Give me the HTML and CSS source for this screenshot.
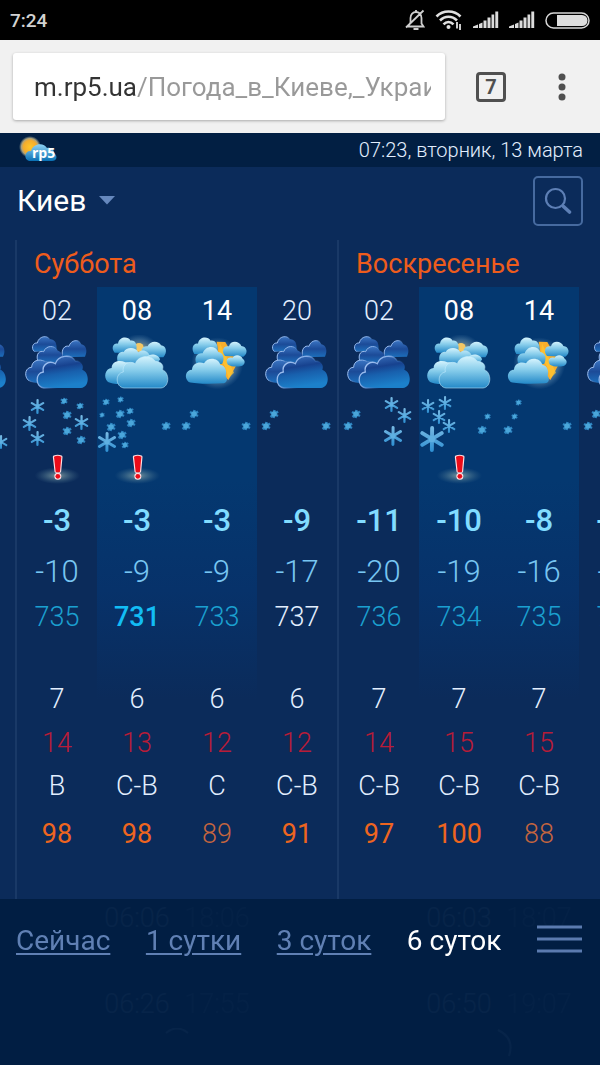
FILE: index.html
```html
<!DOCTYPE html>
<html lang="ru">
<head>
<meta charset="utf-8">
<meta name="viewport" content="width=device-width">
<title>Погода в Киеве</title>
<link rel="stylesheet" href="styles.css">
</head>
<body>
<svg class="defs" aria-hidden="true">
  <defs>
    <linearGradient id="night" x1="0" y1="0" x2="0" y2="1"><stop offset="0" stop-color="#3a74c2"/><stop offset=".5" stop-color="#1c4b98"/><stop offset="1" stop-color="#1c6fbc"/></linearGradient>
    <linearGradient id="nightFront" x1="0" y1="0" x2=".25" y2="1"><stop offset="0" stop-color="#3f78c4"/><stop offset=".4" stop-color="#17428f"/><stop offset=".62" stop-color="#1860ad"/><stop offset="1" stop-color="#1c80ca"/></linearGradient>
    <linearGradient id="day" x1="0" y1="0" x2="0" y2="1"><stop offset="0" stop-color="#d4f3fd"/><stop offset=".45" stop-color="#84cbea"/><stop offset="1" stop-color="#2489c8"/></linearGradient>
    <linearGradient id="edge" x1="0" y1="0" x2="1" y2=".6"><stop offset="0" stop-color="#c4dcff"/><stop offset=".45" stop-color="#7fa8e4"/><stop offset=".75" stop-color="#2460ac" stop-opacity="0"/></linearGradient>
    <linearGradient id="ice" x1="0" y1="-10" x2="0" y2="10" gradientUnits="userSpaceOnUse"><stop offset="0" stop-color="#7abbe4"/><stop offset="1" stop-color="#2d8fd2"/></linearGradient>
    <radialGradient id="sun"><stop offset="0" stop-color="#ffc629"/><stop offset=".6" stop-color="#f4ac2c"/><stop offset=".78" stop-color="#d9c184" stop-opacity=".8"/><stop offset="1" stop-color="#a8b8b0" stop-opacity="0"/></radialGradient>
    <radialGradient id="haze"><stop offset="0" stop-color="#ffc54a"/><stop offset=".45" stop-color="#c9c9a0"/><stop offset=".75" stop-color="#7fa5bd" stop-opacity=".6"/><stop offset="1" stop-color="#5f90b8" stop-opacity="0"/></radialGradient>
    <radialGradient id="glow"><stop offset="0" stop-color="#a4b9ad" stop-opacity=".75"/><stop offset=".5" stop-color="#7296a0" stop-opacity=".4"/><stop offset="1" stop-color="#4c7892" stop-opacity="0"/></radialGradient>
    <linearGradient id="logoCloud" x1="0" y1="0" x2="0" y2="1"><stop offset="0" stop-color="#8fd3f5"/><stop offset="1" stop-color="#0870b4"/></linearGradient>
  </defs>
  <symbol id="cloud-night" viewBox="51 285 240 171">
    <g fill="url(#night)" stroke="url(#edge)" stroke-width="3">
      <path d="M102 334C92 322 100 307 112 309C116 288 142 284 150 299C164 297 174 311 168 335Z"/>
      <path d="M188 352C182 327 195 315 207 319C212 299 238 296 243 313C258 315 264 332 255 350Z"/>
      <path d="M113 362C107 340 120 331 131 335C138 316 163 314 173 332C186 335 192 350 190 370Z"/>
      <path d="M84 420C70 404 79 381 95 382C95 363 116 354 136 365C150 362 160 373 160 392L146 428C115 432 95 427 84 420Z"/>
    </g>
    <path fill="url(#nightFront)" stroke="url(#edge)" stroke-width="4" d="M132 444C106 441 104 400 130 396C125 373 148 360 166 371C174 345 213 341 226 363C246 364 252 378 247 389C269 397 270 441 243 444Z"/>
  </symbol>
  <symbol id="cloud-day" viewBox="51 285 240 171">
    <circle cx="177" cy="348" r="66" fill="url(#haze)" opacity=".6"/>
    <ellipse cx="177" cy="322" rx="14" ry="13" fill="#f3c765"/>
    <g fill="url(#day)">
      <path d="M104 338C92 325 100 308 114 311C118 289 144 288 152 302C166 300 174 314 168 338Z"/>
      <path d="M188 352C180 330 186 317 203 319C209 301 237 301 243 316C258 317 264 336 250 352Z"/>
      <path d="M113 366C107 344 120 333 131 336C138 322 165 318 175 337C187 326 206 332 212 352L205 376Z"/>
      <path d="M200 352C208 338 236 342 240 358L232 372L200 372Z"/>
      <path d="M84 426C68 411 77 385 95 384C95 366 116 358 136 367C152 364 160 373 160 392L150 430C120 434 95 432 84 426Z"/>
      <path stroke="#c7efff" stroke-width="3" stroke-opacity=".55" d="M132 444C106 441 104 400 130 396C125 373 148 360 166 371C174 346 213 342 226 364C246 365 252 378 247 389C269 397 270 441 243 444Z"/>
    </g>
  </symbol>
  <symbol id="cloud-sun" viewBox="51 285 240 171">
    <circle cx="172" cy="370" r="78" fill="url(#haze)" opacity=".7"/>
    <path d="M170 305L196 306L232 370L205 420L184 400Z" fill="#f8ae2c"/>
    <path d="M180 310L198 348L222 398L206 415L194 378L176 348Z" fill="#ffc630" opacity=".7"/>
    <g fill="url(#day)">
      <path d="M103 342C92 326 100 308 114 311C118 289 144 288 152 302C166 300 178 314 170 342Z"/>
      <path d="M110 372C100 352 113 337 128 340C137 314 168 316 175 336C191 338 195 358 186 372Z"/>
      <path d="M195 348C182 332 191 315 207 319C211 299 239 302 244 318C261 319 266 340 250 350Z"/>
      <path d="M204 374C194 360 205 349 217 354C224 341 244 345 248 356C260 364 252 376 244 378C230 381 214 380 204 374Z"/>
      <path d="M86 426C70 411 79 389 96 389C97 369 119 363 132 370C144 350 174 353 181 374C197 377 201 394 197 407C205 419 199 430 188 430C150 432 105 432 86 426Z"/>
    </g>
  </symbol>
  <symbol id="flake" viewBox="-10 -10 20 20"><g stroke="url(#ice)" stroke-width="3" stroke-linecap="round" fill="none"><path d="M.1 -8.5L-.1 8.5M-7.5 -4.5L7.5 4.5M7.5 -4.5L-7.5 4.5"/></g><circle r="2.5" fill="#5fb0e2"/></symbol>
  <symbol id="speck" viewBox="-10 -10 20 20"><path stroke="#2f86c2" stroke-width="5" d="M1 -8L-1 8M-8 -4L8 4M8 -5L-7 6"/><circle r="5.5" fill="#4aa6da"/></symbol>
  <symbol id="alert" viewBox="51 636 240 120">
    <ellipse cx="172" cy="707" rx="68" ry="25" fill="url(#glow)"/>
    <g stroke="#ffdde2" stroke-width="9" stroke-linejoin="round"><path d="M163 651Q173 647 183 651L179 694H168Z"/><circle cx="173.500" cy="709" r="6"/></g>
    <g fill="#ec0b18"><path d="M162 650Q173 645 184 650L180 695Q173.500 698 167 695Z"/><circle cx="173.500" cy="709" r="7"/></g>
  </symbol>
  <symbol id="signal" viewBox="0 0 26 18"><path fill="#dcdcdc" d="M0 15.500L5 13.500V17H0ZM6 13L9.500 11.500V17H6ZM10.500 9.500H13.500V17H10.500ZM14.500 6.500H17.500V17H14.500ZM18.500 3.500H21.200V17H18.500ZM22.300 .5H25.200V17H22.300Z"/></symbol>
</svg>

<header class="status">
  <span class="clock">7:24</span>
  <span class="status-icons">
    <svg width="20" height="22" viewBox="0 0 20 22" fill="none" stroke="#cfcfcf" stroke-width="1.800"><path d="M3 17.500H18.500L16.500 14.500V9C16.500 5.500 14 3 11 3C8 3 5.500 5.500 5.500 9V13.500L3 17.500ZM11 3V1M1 18.500L18.500 1.500"/><path d="M8.500 20H13.500" stroke-width="2"/></svg>
    <svg width="28" height="22" viewBox="0 0 28 22" fill="none" stroke="#e0e0e0" stroke-width="2.600"><path d="M1.500 7.500C8 .8 19 .8 25.500 7.500M5 11.500C10 6.500 17 6.500 22 11.500M8.500 15.300C11.500 12.300 15.500 12.300 18.500 15.300"/><circle cx="13.500" cy="18" r="2" fill="#e0e0e0" stroke="none"/><path stroke-width="1.800" d="M22 13V19.500M25 15V21"/></svg>
    <svg width="26" height="18"><use href="#signal"/></svg>
    <svg width="26" height="18"><use href="#signal"/></svg>
    <svg width="45" height="17" viewBox="0 0 45 17"><rect x="1" y="1" width="43" height="15" rx="7.500" fill="none" stroke="#d6d6d6" stroke-width="1.500"/><path d="M12 3H37A5.500 5.500 0 0 1 37 14H12Z" fill="#dedede"/></svg>
  </span>
</header>

<div class="browser">
  <div class="address-box"><input class="address" type="text" aria-label="Адрес" value="m.rp5.ua/Погода_в_Киеве,_Украина"></div>
  <button class="tabs" type="button" aria-label="Вкладки">7</button>
  <button class="more" type="button" aria-label="Меню браузера"><svg width="8" height="28" viewBox="0 0 8 28" fill="#505050"><circle cx="4" cy="4" r="3.500"/><circle cx="4" cy="14" r="3.500"/><circle cx="4" cy="24" r="3.500"/></svg></button>
</div>

<div class="site-bar">
  <a class="logo" href="#" aria-label="rp5"><svg width="40" height="30" viewBox="0 0 40 30"><circle cx="11" cy="12" r="11" fill="url(#sun)"/><path d="M10 26C4 24 6 15 12 16C14 8 25 7 28 13C34 12 35 16 35 18C39 21 38 26 33 26Z" fill="url(#logoCloud)"/><text class="logo-text" x="13" y="23">rp5</text></svg></a>
  <time class="now">07:23, вторник, 13 марта</time>
</div>

<div class="place">
  <button class="city" type="button">Киев <svg width="16" height="9" viewBox="0 0 16 9"><path d="M0 0H16L8 8.500Z" fill="#6688bd"/></svg></button>
  <button class="search" type="button" aria-label="Поиск"><svg width="28" height="28" viewBox="0 0 28 28" fill="none" stroke="#5d7fb5"><circle cx="11.500" cy="11.500" r="9.500" stroke-width="2.200"/><path d="M18.500 18.500L20 20" stroke-width="2"/><path d="M19.500 19.500L25.500 25" stroke-width="3.600" stroke-linecap="round"/></svg></button>
</div>

<main class="forecast">
<table>
  <colgroup>
    <col class="c"><col class="c first"><col class="c lit"><col class="c lit"><col class="c"><col class="c first"><col class="c lit"><col class="c lit"><col class="c">
  </colgroup>
  <tr class="days"><td></td><th class="edge" colspan="4">Суббота</th><th class="edge" colspan="4">Воскресенье</th></tr>
  <tr class="hours"><td></td><td class="edge">02</td><td class="b">08</td><td class="b">14</td><td>20</td><td class="edge">02</td><td class="b">08</td><td class="b">14</td><td></td></tr>
  <tr class="clouds">
    <td><svg><use href="#cloud-night"/></svg></td>
    <td class="edge"><svg><use href="#cloud-night"/></svg></td>
    <td><svg><use href="#cloud-day"/></svg></td>
    <td><svg><use href="#cloud-sun"/></svg></td>
    <td><svg><use href="#cloud-night"/></svg></td>
    <td class="edge"><svg><use href="#cloud-night"/></svg></td>
    <td><svg><use href="#cloud-day"/></svg></td>
    <td><svg><use href="#cloud-sun"/></svg></td>
    <td><svg><use href="#cloud-night"/></svg></td>
  </tr>
  <tr class="snow">
    <td><svg><use href="#flake" x="59" y="43" width="14" height="14"/></svg></td>
    <td class="edge"><svg><use href="#flake" x="13" y="7" width="15" height="15"/><use href="#flake" x="5" y="24" width="15" height="15"/><use href="#flake" x="13" y="39" width="15" height="15"/><use href="#speck" x="43" y="5" width="8" height="8"/><use href="#speck" x="59" y="10" width="8" height="8"/><use href="#speck" x="45" y="18" width="10" height="10"/><use href="#flake" x="57" y="23" width="15" height="15"/><use href="#speck" x="45" y="34" width="10" height="10"/><use href="#speck" x="59" y="43" width="10" height="10"/></svg></td>
    <td><svg><use href="#speck" x="5" y="6" width="8" height="8"/><use href="#speck" x="20" y="4" width="7" height="7"/><use href="#speck" x="2" y="20" width="6" height="6"/><use href="#speck" x="18" y="17" width="10" height="10"/><use href="#speck" x="29" y="15" width="8" height="8"/><use href="#speck" x="29" y="26" width="10" height="10"/><use href="#speck" x="9" y="30" width="10" height="10"/><use href="#flake" x="0" y="40" width="20" height="20"/><use href="#speck" x="20" y="38" width="10" height="10"/><use href="#speck" x="24" y="49" width="8" height="8"/><use href="#speck" x="64" y="29" width="10" height="10"/></svg></td>
    <td><svg><use href="#speck" x="4" y="29" width="10" height="10"/><use href="#speck" x="12" y="17" width="10" height="10"/><use href="#speck" x="64" y="29" width="10" height="10"/></svg></td>
    <td><svg><use href="#speck" x="4" y="29" width="10" height="10"/><use href="#speck" x="12" y="17" width="10" height="10"/><use href="#speck" x="64" y="29" width="10" height="10"/></svg></td>
    <td class="edge"><svg><use href="#speck" x="4" y="29" width="10" height="10"/><use href="#speck" x="12" y="17" width="10" height="10"/><use href="#flake" x="45" y="5" width="15" height="15"/><use href="#flake" x="58" y="16" width="15" height="15"/><use href="#flake" x="44" y="34" width="20" height="20"/></svg></td>
    <td><svg><use href="#flake" x="2" y="7" width="14" height="14"/><use href="#flake" x="19" y="4" width="14" height="14"/><use href="#flake" x="13" y="18" width="14" height="14"/><use href="#flake" x="23" y="27" width="14" height="14"/><use href="#flake" x="0" y="34" width="26" height="26"/><use href="#speck" x="65" y="21" width="7" height="7"/><use href="#speck" x="58" y="33" width="10" height="10"/></svg></td>
    <td><svg><use href="#speck" x="16" y="7" width="7" height="7"/><use href="#speck" x="12" y="21" width="7" height="7"/><use href="#speck" x="4" y="33" width="10" height="10"/><use href="#speck" x="63" y="29" width="10" height="10"/></svg></td>
    <td><svg><use href="#speck" x="4" y="29" width="10" height="10"/><use href="#speck" x="12" y="17" width="10" height="10"/></svg></td>
  </tr>
  <tr class="alerts"><td></td><td class="edge"><svg><use href="#alert"/></svg></td><td><svg><use href="#alert"/></svg></td><td></td><td></td><td class="edge"></td><td><svg><use href="#alert"/></svg></td><td></td><td></td></tr>
  <tr class="temp"><td></td><td class="edge">-3</td><td>-3</td><td>-3</td><td>-9</td><td class="edge">-11</td><td>-10</td><td>-8</td><td>-10</td></tr>
  <tr class="feels"><td></td><td class="edge">-10</td><td>-9</td><td>-9</td><td>-17</td><td class="edge">-20</td><td>-19</td><td>-16</td><td>-18</td></tr>
  <tr class="pressure"><td></td><td class="edge">735</td><td class="low">731</td><td>733</td><td class="mid">737</td><td class="edge">736</td><td>734</td><td>735</td><td>735</td></tr>
  <tr class="wind"><td></td><td class="edge">7</td><td>6</td><td>6</td><td>6</td><td class="edge">7</td><td>7</td><td>7</td><td></td></tr>
  <tr class="gust"><td></td><td class="edge">14</td><td>13</td><td>12</td><td>12</td><td class="edge">14</td><td>15</td><td>15</td><td></td></tr>
  <tr class="dir"><td></td><td class="edge">В</td><td>С-В</td><td>С</td><td>С-В</td><td class="edge">С-В</td><td>С-В</td><td>С-В</td><td></td></tr>
  <tr class="humid"><td></td><td class="edge b">98</td><td class="b">98</td><td>89</td><td class="b">91</td><td class="edge b">97</td><td class="b">100</td><td>88</td><td></td></tr>
  <tr class="sunrise"><td></td><td></td><td>06:06</td><td class="dim">18:06</td><td></td><td></td><td>06:03</td><td class="dim">18:07</td><td></td></tr>
  <tr class="moonrise"><td></td><td></td><td>06:26</td><td class="dim">17:55</td><td></td><td></td><td>06:50</td><td class="dim">19:07</td><td></td></tr>
  <tr class="moon"><td></td><td></td><td colspan="2"><svg width="30" height="30" viewBox="0 0 30 30" fill="none" stroke="currentColor" stroke-width="2"><path d="M4 5Q15 -4 26 5"/></svg></td><td></td><td></td><td colspan="2"><svg width="30" height="30" viewBox="0 0 30 30" fill="none" stroke="currentColor" stroke-width="2"><path d="M14 2Q31 10 25 28"/></svg></td><td></td></tr>
</table>
</main>

<nav class="periods">
  <a href="#">Сейчас</a>
  <a href="#">1 сутки</a>
  <a href="#">3 суток</a>
  <a class="current" href="#" aria-current="page">6 суток</a>
  <button class="menu" type="button" aria-label="Меню"><svg width="45" height="28" viewBox="0 0 45 28" stroke="#5b7bb0" stroke-width="3"><path d="M0 2H45M0 14H45M0 26H45"/></svg></button>
</nav>
</body>
</html>
```
FILE: styles.css
```css
* { box-sizing: border-box; }

body {
  margin: 0;
  min-height: 100vh;
  background: #0b2b5a;
  color: #e3efff;
  font-family: Roboto, "Noto Sans", sans-serif;
  font-size: 27px;
  overflow: hidden;
}

button {
  padding: 0;
  border: 0;
  background: none;
  color: inherit;
  font: inherit;
}

svg { display: block; }

.defs {
  position: absolute;
  width: 0;
  height: 0;
}

.status {
  display: flex;
  align-items: center;
  justify-content: space-between;
  height: 40px;
  padding: 0 10px;
  background: #000;
}

.clock {
  color: #d2d2d2;
  font-size: 19px;
  font-weight: 500;
}

.status-icons {
  display: flex;
  align-items: center;
  gap: 10px;
}

.browser {
  display: flex;
  align-items: center;
  height: 93px;
  padding: 0 34px 0 13px;
  background: #f1f1f1;
}

.address-box {
  flex: 1;
  min-width: 0;
  height: 67px;
  padding: 0 14px 0 21px;
  border-radius: 3px;
  background: #fff;
  box-shadow: 0 1px 3px rgba(0, 0, 0, .3);
}

.address {
  width: 100%;
  height: 100%;
  padding: 0;
  border: 0;
  background: linear-gradient(90deg, #333 103px, #999 103px);
  background-clip: text;
  -webkit-background-clip: text;
  color: transparent;
  font: 26px Roboto, sans-serif;
}

.tabs {
  width: 30px;
  height: 30px;
  margin: 0 52px 0 31px;
  border: 3px solid #505050;
  border-radius: 4px;
  color: #505050;
  font-size: 20px;
  font-weight: 700;
  line-height: 24px;
}

.site-bar {
  display: flex;
  align-items: center;
  justify-content: space-between;
  height: 34px;
  padding: 0 17px 0 19px;
  background: #021f43;
}

.logo-text {
  fill: #fff;
  font: 700 14px "Open Sans", sans-serif;
}

.now {
  font-size: 20px;
  font-weight: 300;
}

.place {
  display: flex;
  align-items: center;
  justify-content: space-between;
  height: 73px;
  padding: 0 17px 6px;
}

.city {
  display: flex;
  align-items: center;
  gap: 13px;
  color: #fff;
  font-size: 30px;
}

.search {
  display: grid;
  place-items: center;
  width: 50px;
  height: 50px;
  border: 2px solid #466a9f;
  border-radius: 5px;
}

.forecast { overflow: hidden; }

table {
  width: 724px;
  margin-left: -65px;
  border-spacing: 0;
  table-layout: fixed;
}

.c { width: 80px; }
.first { width: 82px; }

.lit {
  background: linear-gradient(#043870 0, #043870 240px, #07326a 350px, rgba(11, 43, 90, 0) 460px);
}

td, th {
  padding: 0;
  font-weight: 300;
  text-align: center;
}

.edge { border-left: 2px solid #193967; }
.b { font-weight: 500; }

.days { height: 47px; }

.days th {
  padding-left: 17px;
  color: #ee5c1c;
  font-size: 27px;
  font-weight: 400;
  text-align: left;
}

.hours { height: 48px; }

.hours .b {
  color: #fff;
  font-weight: 400;
}

td > svg {
  width: 80px;
  margin: 0 auto;
}

.clouds svg { height: 57px; }
.snow svg { height: 60px; }
.alerts { height: 40px; }
.alerts svg { height: 40px; }

.temp {
  height: 56px;
  color: #81dcff;
  font-size: 31px;
}

.temp td { font-weight: 500; }

.feels {
  height: 46px;
  color: #77c5f2;
  font-size: 31px;
}

.pressure {
  height: 46px;
  color: #1ba0d0;
}

.pressure .low {
  color: #12bdf5;
  font-weight: 500;
}

.pressure .mid { color: #e3efff; }

.wind { height: 81px; }
.wind td { padding-top: 37px; }
.gust { height: 43px; color: #b81c38; }
.dir { height: 43px; }
.humid { height: 92px; color: #c4653f; }
.humid td { padding-bottom: 39px; }

.humid .b {
  color: #ee651f;
  font-weight: 400;
}

.sunrise { height: 38px; }
.moonrise { height: 86px; }
.moonrise td { padding: 47px 0 0; }
.moon { height: 40px; }
.moon svg { width: 30px; height: 30px; }

.sunrise, .moonrise, .moon {
  color: #6f8db5;
  font-size: 27px;
}

.dim { opacity: .5; }

.periods {
  position: fixed;
  right: 0;
  bottom: 0;
  left: 0;
  display: flex;
  align-items: flex-start;
  justify-content: space-between;
  height: 166px;
  padding: 26px 18px 0 16px;
  background: rgba(1, 30, 66, .94);
  font-size: 28px;
  line-height: 32px;
}

.periods a {
  color: #6080b4;
  text-decoration-thickness: 2px;
  text-underline-offset: 3px;
}

.periods .current {
  color: #fff;
  text-decoration: none;
}
```
